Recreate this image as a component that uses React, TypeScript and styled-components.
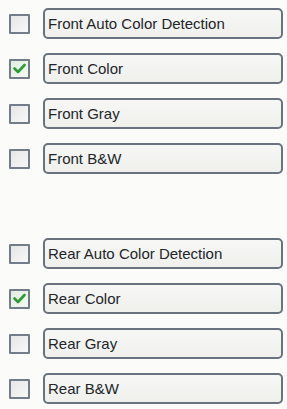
import styled, { createGlobalStyle } from "styled-components";

const GlobalStyle = createGlobalStyle`
  html, body {
    margin: 0;
    padding: 0;
    background: #fbfbfa;
  }
`;

type Option = { label: string; checked: boolean };

const groups: Option[][] = [
  [
    { label: "Front Auto Color Detection", checked: false },
    { label: "Front Color", checked: true },
    { label: "Front Gray", checked: false },
    { label: "Front B&W", checked: false },
  ],
  [
    { label: "Rear Auto Color Detection", checked: false },
    { label: "Rear Color", checked: true },
    { label: "Rear Gray", checked: false },
    { label: "Rear B&W", checked: false },
  ],
];

const Check: React.FC<{ checked: boolean }> = ({ checked }) => (
  <Box $checked={checked}>
    {checked && (
      <svg width="13" height="11" viewBox="0 0 13 11">
        <path
          d="M1.5 5.5 L5 9 L11.5 2"
          fill="none"
          stroke="#2f9b35"
          strokeWidth="2.6"
          strokeLinecap="round"
          strokeLinejoin="round"
        />
      </svg>
    )}
  </Box>
);

const App: React.FC = () => {
  return (
    <>
      <GlobalStyle />
      <Panel>
        {groups.map((group, gi) => (
          <Group key={gi}>
            {group.map(opt => (
              <Row key={opt.label}>
                <Check checked={opt.checked} />
                <Button>{opt.label}</Button>
              </Row>
            ))}
          </Group>
        ))}
      </Panel>
    </>
  );
};

export default App;

const Panel = styled.div`
  display: flex;
  flex-direction: column;
  gap: 64px;
  padding: 8px 4px 0 9px;
  font-family: "Liberation Sans", Arial, sans-serif;
`;

const Group = styled.div`
  display: flex;
  flex-direction: column;
  gap: 14px;
`;

const Row = styled.div`
  display: flex;
  align-items: center;
  gap: 13px;
`;

const Box = styled.div<{ $checked: boolean }>`
  box-sizing: border-box;
  width: 21px;
  height: 20px;
  border: 2px solid #737c89;
  border-radius: 1px;
  display: flex;
  align-items: center;
  justify-content: center;
  background: ${p =>
    p.$checked
      ? "linear-gradient(135deg, #e2eee0 0%, #f4f8f2 100%)"
      : "linear-gradient(135deg, #e6e6e6 0%, #f8f8f8 100%)"};
`;

const Button = styled.div`
  box-sizing: border-box;
  width: 240px;
  height: 31px;
  border: 2px solid #6a727d;
  border-radius: 5px;
  background: linear-gradient(180deg, #f7f7f5 0%, #efefec 100%);
  display: flex;
  align-items: center;
  padding-left: 3px;
  font-size: 15px;
  color: #22262a;
  white-space: nowrap;
`;
